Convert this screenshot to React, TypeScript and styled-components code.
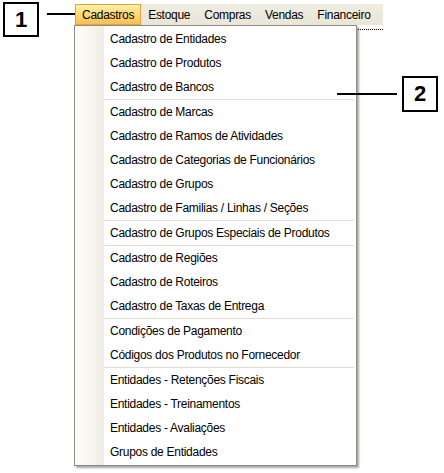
import React from "react";
import styled, { createGlobalStyle } from "styled-components";

const Global = createGlobalStyle`
  html, body { margin: 0; padding: 0; background: #ffffff; }
  body { font-family: "Liberation Sans", Arial, sans-serif; }
`;

const Page = styled.div`
  position: relative;
  width: 444px;
  height: 473px;
  display: flex;
  align-items: flex-start;
  padding: 2px 0 0 3px;
  box-sizing: border-box;
  overflow: hidden;
`;

const CalloutBox = styled.div<{ $h?: number }>`
  width: 36px;
  height: ${(p) => p.$h ?? 35}px;
  box-sizing: border-box;
  border: 2px solid #000;
  display: flex;
  align-items: center;
  justify-content: center;
  font-family: "Liberation Sans", Arial, sans-serif;
  font-weight: bold;
  font-size: 22px;
  color: #000;
  background: #fff;
`;

const Leader = styled.div<{ $w: number; $ml: number; $mt: number }>`
  width: ${(p) => p.$w}px;
  height: 2px;
  background: #000;
  margin-left: ${(p) => p.$ml}px;
  margin-top: ${(p) => p.$mt}px;
  flex: none;
`;

const Callout2 = styled.div`
  position: absolute;
  left: 337px;
  top: 76px;
  display: flex;
  align-items: center;
  gap: 5px;
  z-index: 3;
`;

const MenuColumn = styled.div`
  position: relative;
  margin-top: 2px;
  display: flex;
  flex-direction: column;
`;

const MenuBar = styled.div`
  display: flex;
  height: 21px;
  width: 308px;
  background: linear-gradient(to bottom, #efece1, #e9e6d8);
  font-size: 12px;
  letter-spacing: -0.28px;
`;

const BarItem = styled.div<{ $active?: boolean }>`
  display: flex;
  align-items: center;
  padding: 0 ${(p) => (p.$active ? 6 : 7)}px;
  box-sizing: border-box;
  color: #000;
  border: ${(p) => (p.$active ? "1px solid #e6a23c" : "none")};
  background: ${(p) =>
    p.$active ? "linear-gradient(to bottom, #fff0a6 0%, #fdd978 50%, #f9bf52 100%)" : "transparent"};
`;

const UnderStrip = styled.div`
  margin-top: 4px;
  width: 308px;
  border-top: 1px dotted #000;
`;

const Dropdown = styled.div`
  position: absolute;
  left: -1px;
  top: 21px;
  width: 283px;
  box-sizing: border-box;
  border: 1px solid #8d8b85;
  padding: 1px 0;
  background-color: #fff;
  background-image: linear-gradient(to right, #fdfcfa 0%, #f6f4ee 60%, #efede4 100%);
  background-size: 29px 100%;
  background-repeat: no-repeat;
  box-shadow: 2px 2px 2px rgba(0, 0, 0, 0.35);
  z-index: 2;
  font-size: 12px;
  letter-spacing: -0.28px;
`;

const Row = styled.div`
  height: 24px;
  display: flex;
  align-items: center;
  padding-left: 35px;
  color: #000;
  white-space: nowrap;
`;

const Separator = styled.div`
  height: 1px;
  margin-left: 29px;
  margin-right: 2px;
  background: #e3ded2;
`;

const groups: string[][] = [
  ["Cadastro de Entidades", "Cadastro de Produtos", "Cadastro de Bancos"],
  [
    "Cadastro de Marcas",
    "Cadastro de Ramos de Atividades",
    "Cadastro de Categorias de Funcionários",
    "Cadastro de Grupos",
    "Cadastro de Familias / Linhas / Seções",
  ],
  ["Cadastro de Grupos Especiais de Produtos"],
  ["Cadastro de Regiões", "Cadastro de Roteiros", "Cadastro de Taxas de Entrega"],
  ["Condições de Pagamento", "Códigos dos Produtos no Fornecedor"],
  [
    "Entidades - Retenções Fiscais",
    "Entidades - Treinamentos",
    "Entidades - Avaliações",
    "Grupos de Entidades",
  ],
];

export default function App() {
  return (
    <>
      <Global />
      <Page>
        <CalloutBox>1</CalloutBox>
        <Leader $w={28} $ml={8} $mt={11} />
        <MenuColumn>
          <MenuBar>
            <BarItem $active>Cadastros</BarItem>
            <BarItem>Estoque</BarItem>
            <BarItem>Compras</BarItem>
            <BarItem>Vendas</BarItem>
            <BarItem>Financeiro</BarItem>
          </MenuBar>
          <UnderStrip />
          <Dropdown>
            {groups.map((g, gi) => (
              <React.Fragment key={gi}>
                {gi > 0 && <Separator />}
                {g.map((label) => (
                  <Row key={label}>{label}</Row>
                ))}
              </React.Fragment>
            ))}
          </Dropdown>
        </MenuColumn>
        <Callout2>
          <Leader $w={60} $ml={0} $mt={0} />
          <CalloutBox $h={36}>2</CalloutBox>
        </Callout2>
      </Page>
    </>
  );
}
